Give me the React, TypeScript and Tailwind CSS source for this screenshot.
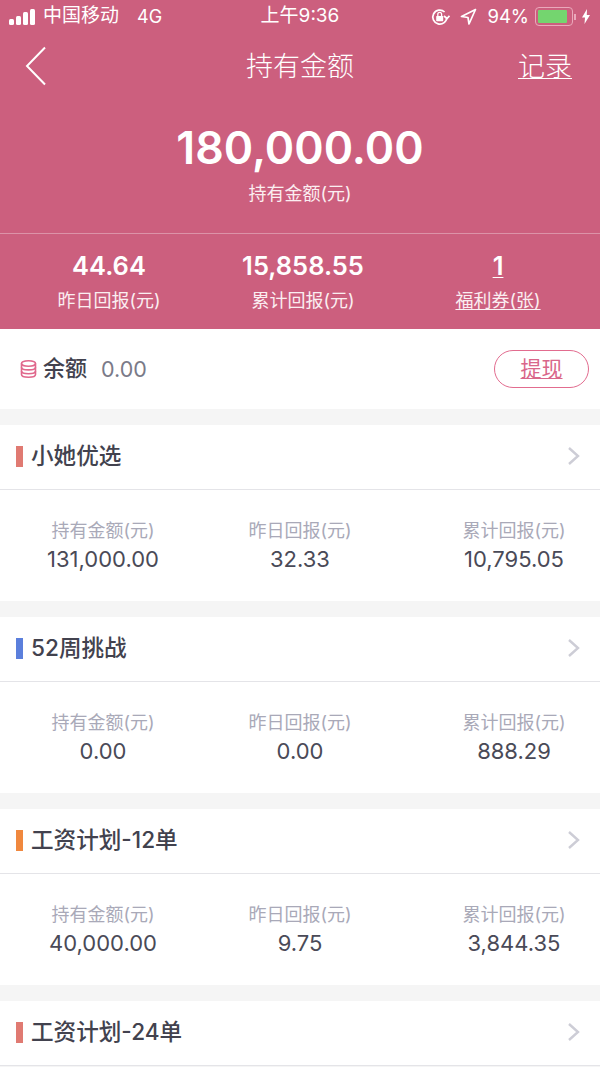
import type { FC } from 'react';

const font = "font-['Inter','Noto_Sans_CJK_SC',sans-serif]";

const Stat: FC<{ label: string; value: string; className?: string }> = ({ label, value, className }) => (
  <div className={`flex flex-col items-center shrink-0 ${className ?? ''}`}>
    <span className="text-[18px] leading-[24px] text-[#a9a9b8]">{label}</span>
    <span className="text-[22px] leading-[32px] text-[#4a4a57]">{value}</span>
  </div>
);

const Plan: FC<{ title: string; bar: string; stats?: string[] }> = ({ title, bar, stats }) => (
  <section className="bg-white mb-4">
    <div className="h-[65px] flex items-center border-b border-[#e4e4e8] pb-[2px]">
      <span className={`w-[7px] h-[21px] ml-4 ${bar}`} />
      <h2 className="ml-2 flex-1 text-[22.6px] font-medium text-[#42424e]">{title}</h2>
      <svg width="14" height="20" viewBox="0 0 14 20" fill="none" stroke="#cdcdd6" strokeWidth="2.4" className="mr-[19px]">
        <path d="M2 2l9 8-9 8" />
      </svg>
    </div>
    {stats && (
      <div className="h-[111px] flex items-center pt-[2px]">
        <Stat label="持有金额(元)" value={stats[0]} className="w-[206px]" />
        <Stat label="昨日回报(元)" value={stats[1]} className="w-[188px]" />
        <Stat label="累计回报(元)" value={stats[2]} className="w-[206px] ml-[17px]" />
      </div>
    )}
  </section>
);

export default function App() {
  return (
    <div className={`w-[600px] h-[1067px] overflow-hidden bg-[#f5f5f5] ${font}`}>
      <header className="bg-[#cc5f7e] text-white h-[329px]">
        {/* status bar */}
        <div className="h-[33px] relative flex items-center text-[19px] pl-[9px] pr-[10px]">
          <div className="flex items-end gap-[2px] h-[16px]">
            <span className="w-[5px] h-[6px] rounded-[1.5px] bg-white" />
            <span className="w-[5px] h-[9px] rounded-[1.5px] bg-white" />
            <span className="w-[5px] h-[13px] rounded-[1.5px] bg-white" />
            <span className="w-[5px] h-[16px] rounded-[1.5px] bg-white" />
          </div>
          <span className="ml-[8px]">中国移动</span>
          <span className="ml-[18px] text-[18px]">4G</span>
          <span className="absolute left-0 right-0 text-center">上午9:36</span>
          <div className="ml-auto flex items-center relative text-[18.5px]">
            <svg width="19" height="18" viewBox="0 0 19 18" fill="none" stroke="white" strokeWidth="1.7" className="mr-[10px]">
              <path d="M15.8 9a7 7 0 1 1-2.2-5" />
              <path d="M13 8l3 2.5 2.5-2.8" />
              <rect x="5.2" y="8" width="7" height="5.2" rx="0.6" fill="white" stroke="none" />
              <path d="M6.8 8V6.3a1.9 1.9 0 0 1 3.8 0V8" strokeWidth="1.3" />
            </svg>
            <svg width="17" height="17" viewBox="0 0 17 17" fill="none" stroke="white" strokeWidth="1.7" className="mr-[10px]">
              <path d="M15.5 1.5L1.5 8.5l6.5 1 1 6.5z" strokeLinejoin="round" />
            </svg>
            <span>94%</span>
            <div className="ml-[6px] w-[38px] h-[19px] rounded-[4px] border border-[#eaa9bb] p-[2px]">
              <div className="h-full w-[92%] bg-[#74d56f] rounded-[1px]" />
            </div>
            <span className="w-[2px] h-[6px] ml-[1px] bg-[#eaa9bb]" />
            <svg width="8" height="15" viewBox="0 0 8 15" fill="white" className="ml-[6px]">
              <path d="M5 0L0 8.5h3L2.5 15 8 6H4.8z" />
            </svg>
          </div>
        </div>
        {/* nav */}
        <div className="h-[66px] flex items-center relative">
          <svg width="22" height="40" viewBox="0 0 22 40" fill="none" stroke="white" strokeWidth="2" className="ml-[25px]">
            <path d="M20 1.5L2 20l18 18.5" />
          </svg>
          <h1 className="absolute left-0 right-0 top-[15px] text-center text-[27px] leading-[38px] font-light">持有金额</h1>
          <span className="ml-auto mr-[28px] mt-[2px] text-[27px] font-light underline underline-offset-2 decoration-1">记录</span>
        </div>
        {/* total */}
        <div className="flex flex-col items-center h-[135px] border-b border-[#dc93a8]">
          <div className="text-[44.6px] leading-[58px] font-semibold mt-[20px]">180,000.00</div>
          <div className="text-[18px] leading-[24px] mt-[5px] text-[#fbeef1]">持有金额(元)</div>
        </div>
        <div className="flex pt-[16px]">
          <div className="w-[206px] flex flex-col items-center ml-[7px]">
            <span className="text-[25.5px] leading-[32px] font-semibold">44.64</span>
            <span className="text-[18px] leading-[24px] mt-[7px] text-[#fbeef1]">昨日回报(元)</span>
          </div>
          <div className="w-[188px] flex flex-col items-center -ml-[1px]">
            <span className="text-[25.5px] leading-[32px] font-semibold">15,858.55</span>
            <span className="text-[18px] leading-[24px] mt-[7px] text-[#fbeef1]">累计回报(元)</span>
          </div>
          <div className="w-[206px] flex flex-col items-center">
            <span className="text-[25.5px] leading-[32px] font-semibold underline decoration-1 underline-offset-2">1</span>
            <span className="text-[18px] leading-[24px] mt-[7px] text-[#fbeef1] underline decoration-1 underline-offset-2">福利券(张)</span>
          </div>
        </div>
      </header>

      {/* balance */}
      <section className="bg-white h-[80px] mb-4 flex items-center">
        <svg width="17" height="18" viewBox="0 0 17 18" fill="none" stroke="#e0688c" strokeWidth="1.6" className="ml-[20px]">
          <ellipse cx="8.5" cy="3.5" rx="7" ry="2.7" />
          <path d="M1.5 3.5v11c0 1.5 3.1 2.7 7 2.7s7-1.2 7-2.7v-11" />
          <path d="M1.5 7.2c0 1.5 3.1 2.7 7 2.7s7-1.2 7-2.7M1.5 11c0 1.5 3.1 2.7 7 2.7s7-1.2 7-2.7" />
        </svg>
        <span className="ml-[6px] text-[22px] font-medium text-[#42424e] -mt-[1px]">余额</span>
        <span className="ml-[14px] text-[21.5px] text-[#7a7a88]">0.00</span>
        <button className="ml-auto mr-[11px] w-[95px] h-[38px] rounded-full border-[1.5px] border-[#e26c8f] text-[21px] text-[#d9668a] underline underline-offset-2 decoration-1">
          提现
        </button>
      </section>

      <Plan title="小她优选" bar="bg-[#e07a72]" stats={['131,000.00', '32.33', '10,795.05']} />
      <Plan title="52周挑战" bar="bg-[#5b7fdc]" stats={['0.00', '0.00', '888.29']} />
      <Plan title="工资计划-12单" bar="bg-[#f0883e]" stats={['40,000.00', '9.75', '3,844.35']} />
      <Plan title="工资计划-24单" bar="bg-[#e07a72]" />
    </div>
  );
}
